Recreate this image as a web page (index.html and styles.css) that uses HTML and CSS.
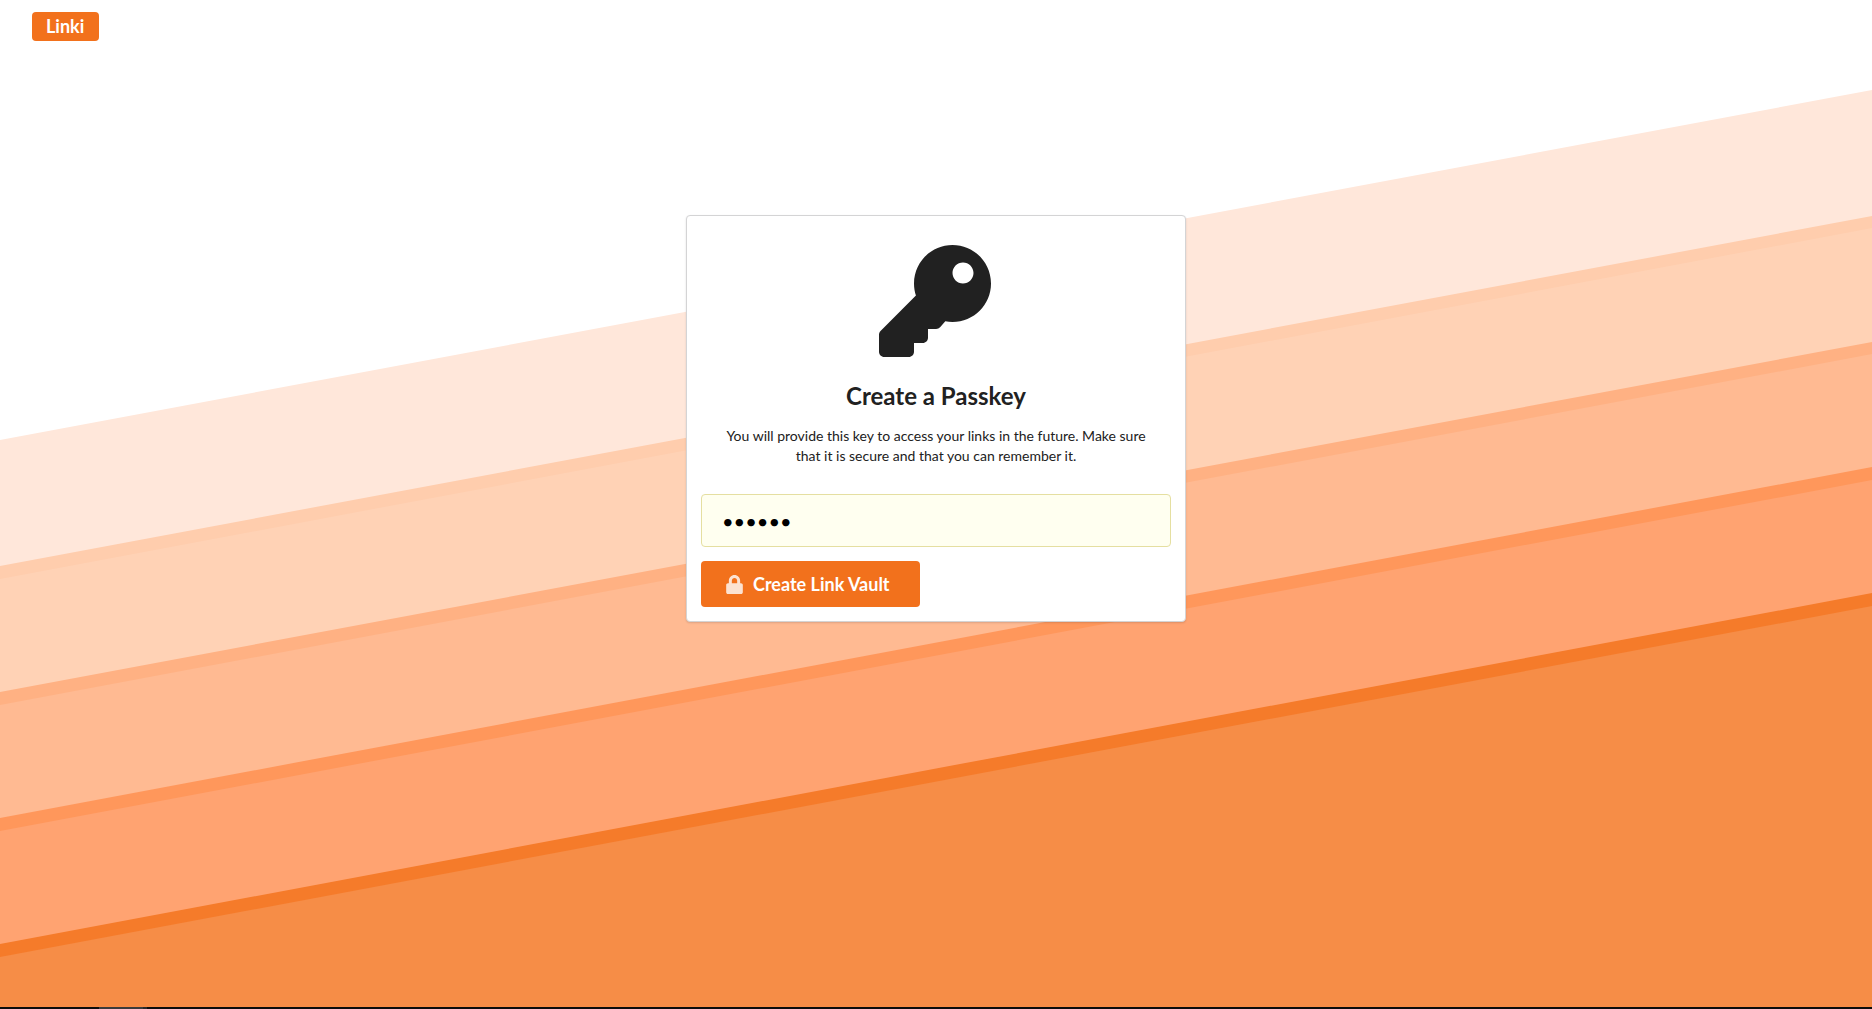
FILE: index.html
```html
<!DOCTYPE html>
<html lang="en">
<head>
<meta charset="utf-8">
<meta name="viewport" content="width=device-width, initial-scale=1">
<title>Linki</title>
<link rel="stylesheet" href="styles.css">
</head>
<body>
<svg class="backdrop" viewBox="0 0 1872 1007" preserveAspectRatio="none" aria-hidden="true">
  <path fill="#ffe7da" d="M0 440 1872 90V1007H0z"/>
  <path fill="#ffcdad" d="M0 566 1872 216V1007H0z"/>
  <path fill="#ffd2b5" d="M0 579 1872 228V1007H0z"/>
  <path fill="#ffb183" d="M0 692 1872 342V1007H0z"/>
  <path fill="#ffba92" d="M0 705 1872 354V1007H0z"/>
  <path fill="#ff975b" d="M0 818 1872 467V1007H0z"/>
  <path fill="#ffa371" d="M0 831 1872 480V1007H0z"/>
  <path fill="#f57b2a" d="M0 944 1872 593V1007H0z"/>
  <path fill="#f68d47" d="M0 957 1872 606V1007H0z"/>
</svg>
<header class="topbar">
  <a class="brand" href="#">Linki</a>
</header>
<main class="content">
  <form class="card">
    <div class="intro">
      <svg class="key" viewBox="0 0 512 512" aria-hidden="true"><path d="M512 176.001C512 273.203 433.202 352 336 352c-11.22 0-22.19-1.062-32.827-3.069l-24.012 27.014A23.999 23.999 0 0 1 261.223 384H224v40c0 13.255-10.745 24-24 24h-40v40c0 13.255-10.745 24-24 24H24c-13.255 0-24-10.745-24-24v-78.059c0-6.365 2.529-12.47 7.029-16.971l161.802-161.802C163.108 213.814 160 195.271 160 176 160 78.798 238.797.001 335.999 0 433.488-.001 512 78.511 512 176.001zM336 128c0 26.51 21.49 48 48 48s48-21.49 48-48-21.49-48-48-48-48 21.49-48 48z"/></svg>
      <h1 class="title"><label for="passkey">Create a Passkey</label></h1>
      <p class="hint">You will provide this key to access your links in the future. Make sure that it is secure and that you can remember it.</p>
    </div>
    <input class="passkey" id="passkey" type="password" value="secret">
    <button class="submit" type="button">
      <svg class="lock" viewBox="0 0 448 512" aria-hidden="true"><path d="M400 224h-24v-72C376 68.200 307.800 0 224 0S72 68.200 72 152v72H48c-26.500 0-48 21.500-48 48v192c0 26.500 21.500 48 48 48h352c26.500 0 48-21.500 48-48V272c0-26.500-21.500-48-48-48zm-104 0H152v-72c0-39.700 32.300-72 72-72s72 32.300 72 72v72z"/></svg>
      Create Link Vault
    </button>
  </form>
</main>
<footer class="edge"><span class="edge-tab"></span></footer>
</body>
</html>
```
FILE: styles.css
```css
* {
  box-sizing: border-box;
}

body {
  margin: 0;
  min-height: 100vh;
  display: flex;
  flex-direction: column;
  background: #fff;
  color: #212121;
  font-family: Lato, "Liberation Sans", sans-serif;
  font-size: 14px;
  line-height: 20px;
}

.backdrop {
  position: absolute;
  inset: 0 0 2px;
  z-index: -1;
  width: 100%;
  height: calc(100% - 2px);
}

.topbar {
  display: flex;
  padding: 12px 32px;
}

.brand {
  padding: 4px 15px 5px 14px;
  border-radius: 4px;
  background: #f2711c;
  color: #fff;
  font-size: 18px;
  font-weight: 700;
  line-height: 20px;
  text-decoration: none;
}

.content {
  flex: 1;
  padding: 162px 16px 32px;
}

.card {
  display: flex;
  flex-direction: column;
  align-items: flex-start;
  gap: 14px;
  max-width: 500px;
  margin: 0 auto;
  padding: 14px;
  border: 1px solid #d4d4d5;
  border-radius: 4px;
  background: #fff;
  box-shadow: 0 1px 2px rgba(34, 36, 38, 0.15);
}

.intro {
  display: flex;
  flex-direction: column;
  align-items: center;
  align-self: stretch;
  padding: 15px 14px 14px;
  text-align: center;
}

.key {
  width: 112px;
  height: 112px;
  margin-right: 3px;
  fill: #212121;
}

.title {
  margin: 24px 0 15px;
  font-size: 24px;
  font-weight: 700;
  line-height: 30px;
}

.hint {
  margin: 0;
}

.passkey {
  width: 100%;
  height: 53px;
  padding: 0 20px;
  border: 1px solid #e5dfa1;
  border-radius: 4px;
  outline: 0;
  background: #fffff0;
  color: #000;
  font-family: inherit;
  font-size: 20px;
}

.submit {
  display: flex;
  align-items: center;
  gap: 10px;
  height: 46px;
  padding: 0 30px 0 25px;
  border: 0;
  border-radius: 4px;
  background: #f2711c;
  color: #fff;
  font-family: inherit;
  font-size: 18px;
  font-weight: 700;
}

.lock {
  width: 17px;
  height: 19px;
  fill: #fff;
  opacity: 0.8;
}

.edge {
  height: 2px;
  padding-left: 99px;
  background: #0c0c0c;
}

.edge-tab {
  display: block;
  width: 48px;
  height: 2px;
  border-right: 4px solid #292929;
  background: #3b3b3b;
}
```
